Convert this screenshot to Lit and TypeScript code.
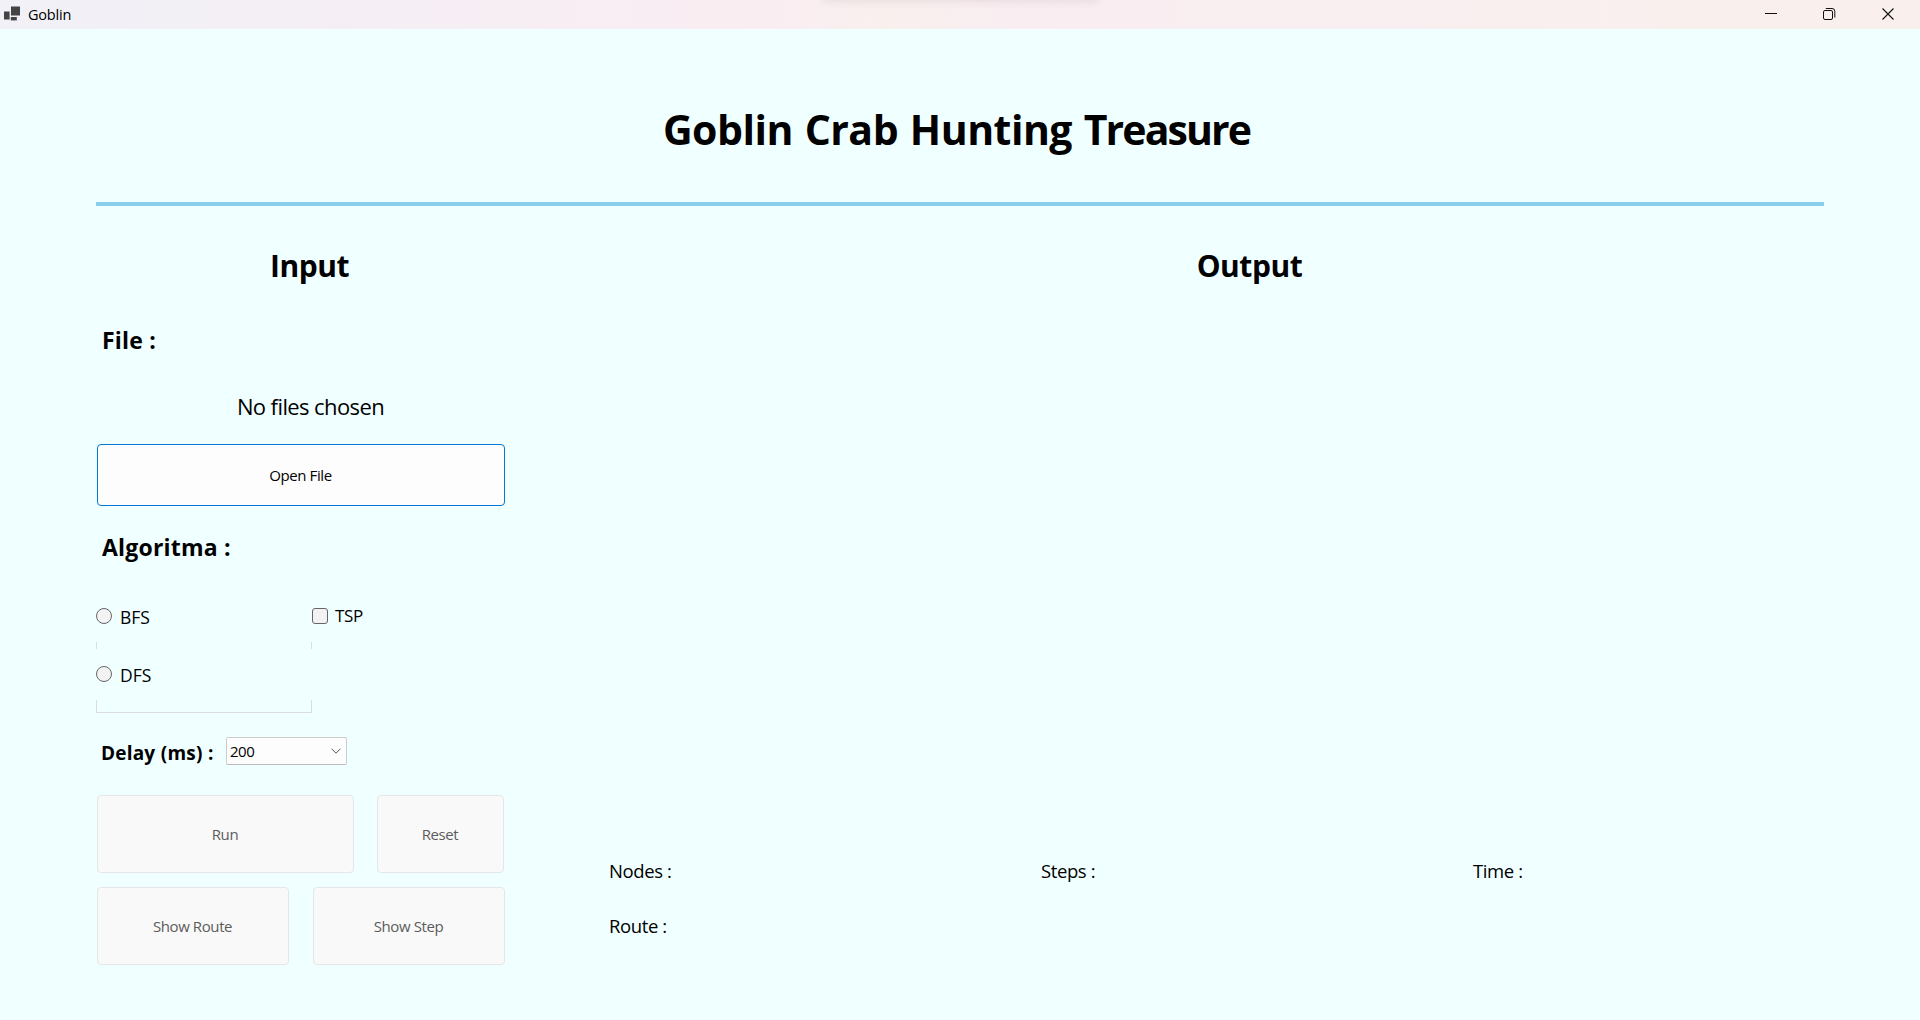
import { LitElement, html, css } from "lit";
import { customElement, state } from "lit/decorators.js";

@customElement("title-bar")
export class TitleBar extends LitElement {
  static styles = css`
    :host {
      display: flex;
      align-items: center;
      height: 29px;
      background: linear-gradient(90deg, #f1f1f7 0%, #f3eff5 12%, #faedf2 40%, #f9f0ee 46%, #f9edf1 53%, #f9eef0 70%, #f9f0ee 88%);
      position: relative;
      overflow: hidden;
    }
    .shade {
      position: absolute;
      left: 826px;
      top: -11px;
      width: 270px;
      height: 9px;
      box-shadow: 0 0 10px 3px rgba(60, 30, 50, 0.1);
    }
    .icon { margin: 0 0 1px 4px; }
    .caption {
      flex: 1;
      margin-left: 8px;
      font-size: 14.5px;
      line-height: 20px;
      letter-spacing: -0.2px;
    }
    .tools { display: flex; }
    .tools svg { display: block; width: 59px; height: 29px; }
  `;
  render() {
    return html`
      <div class="shade"></div>
      <svg class="icon" width="16" height="16" viewBox="0 0 16 16" fill="#444">
        <rect x="7" y="0.5" width="9" height="9" />
        <rect x="0" y="5.5" width="5.6" height="8" />
        <rect x="6.8" y="11" width="6" height="3.4" />
      </svg>
      <span class="caption">Goblin</span>
      <div class="tools">
        <svg viewBox="0 0 59 29"><path d="M22 13.5h12" stroke="#111" /></svg>
        <svg viewBox="0 0 59 29" fill="none" stroke="#111">
          <rect x="21.5" y="10.5" width="9" height="9" rx="1.5" />
          <path d="M23.8 8.5h6.2a2.8 2.8 0 0 1 2.8 2.8v6.2" />
        </svg>
        <svg viewBox="0 0 59 29"><path d="M21.5 8.5l11 11m0-11l-11 11" stroke="#111" stroke-width="1.1" /></svg>
      </div>
    `;
  }
}

@customElement("app-root")
export class AppRoot extends LitElement {
  static styles = css`
    :host {
      display: flex;
      flex-direction: column;
      box-sizing: border-box;
      height: 1020px;
      background: #f0ffff;
      color: #000;
      font-family: "Open Sans", "Noto Sans", sans-serif;
      overflow: hidden;
    }
    * { box-sizing: border-box; }
    h1, h2, h3 { margin: 0; font-weight: 700; white-space: nowrap; }
    header {
      height: 177px;
      margin: 0 96px;
      padding: 27px 7px 0 0;
      display: flex;
      align-items: center;
      justify-content: center;
      border-bottom: 4px solid #87ceeb;
    }
    h1 { font-size: 41px; line-height: 56px; letter-spacing: -0.5px; word-spacing: 1.6px; }
    h1 .tight { letter-spacing: -1.9px; }
    h2 { font-size: 30px; line-height: 116px; padding-top: 2px; text-align: center; letter-spacing: -0.45px; }
    h3 { font-size: 23px; padding-left: 6px; letter-spacing: 0.2px; }
    main { display: grid; grid-template-columns: 432px 1300px; column-gap: 72px; padding-left: 96px; }
    .input { display: flex; flex-direction: column; }
    .input h2 { padding-right: 5px; }
    .output h2 { padding-right: 1px; }
    .file { line-height: 32px; }
    .chosen {
      font-size: 22px;
      line-height: 75px;
      letter-spacing: -0.6px;
      margin-top: 13px;
      padding-right: 3px;
      text-align: center;
    }
    .btn {
      font: inherit;
      font-size: 15px;
      letter-spacing: -0.4px;
      color: #000;
      background: #fdfdfd;
      border: 1px solid #0078d4;
      border-radius: 4px;
      padding: 0 1px 0 0;
      height: 78px;
      width: 100%;
    }
    .btn:disabled { color: #5c5c5c; background: #f9f9f9; border-color: #e6e6e6; }
    .open { width: 408px; height: 62px; margin-left: 1px; }
    .algo { line-height: 82px; }
    .choices { display: grid; grid-template-columns: 216px 1fr; height: 125px; }
    .choice { display: flex; align-items: center; font-size: 17.5px; line-height: 24px; gap: 8px; }
    .radio, .check { width: 16px; height: 16px; background: #f3f3f3; border: 1px solid #666; }
    .radio { border-radius: 50%; }
    .check { border-radius: 3px; }
    .group .choice { height: 52px; }
    .group { padding-top: 2px; }
    .group .choice span { padding-top: 2px; }
    .edge { height: 7px; border: solid #dcdcdc; border-width: 0 1px; }
    .edge.last { height: 13px; border-bottom-width: 1px; }
    .group .second { height: 51px; padding-bottom: 1px; }
    .tsp { height: 56px; font-size: 17px; gap: 7px; letter-spacing: -0.3px; }
    .delay { display: flex; align-items: center; height: 76px; font-size: 19px; font-weight: 700; padding-left: 5px; }
    .delay .label { width: 125px; padding-top: 4px; white-space: nowrap; letter-spacing: 0.2px; word-spacing: 0.3px; }
    .select {
      display: flex;
      align-items: center;
      justify-content: space-between;
      width: 121px;
      height: 28px;
      padding: 0 5px 0 3px;
      font-size: 15px;
      letter-spacing: -0.5px;
      font-weight: 400;
      background: #fdfdfd;
      border: 1px solid #ccc;
      border-bottom-color: #bbb;
      border-radius: 2px;
    }
    .row { display: grid; margin: 6px 0 0 1px; }
    .row.first { grid-template-columns: 257px 127px; gap: 23px; }
    .row.next { grid-template-columns: 192px 192px; gap: 24px; margin-top: 14px; }
    .output { display: flex; flex-direction: column; }
    .stats {
      margin-top: 519px;
      display: grid;
      grid-template-columns: 432px 432px 1fr;
      font-size: 18.5px;
      line-height: 55px;
      letter-spacing: -0.4px;
      padding-left: 9px;
    }
  `;

  @state() private fileName = "No files chosen";
  @state() private delay = 200;

  render() {
    return html`
      <title-bar></title-bar>
      <header><h1>Goblin Crab Hunting <span class="tight">Treasure</span></h1></header>
      <main>
        <section class="input">
          <h2>Input</h2>
          <h3 class="file">File :</h3>
          <div class="chosen">${this.fileName}</div>
          <button class="btn open">Open File</button>
          <h3 class="algo">Algoritma :</h3>
          <div class="choices">
            <div class="group">
              <div class="choice"><i class="radio"></i><span>BFS</span></div>
              <div class="edge"></div>
              <div class="choice second"><i class="radio"></i><span>DFS</span></div>
              <div class="edge last"></div>
            </div>
            <div class="choice tsp"><i class="check"></i><span>TSP</span></div>
          </div>
          <div class="delay">
            <span class="label">Delay (ms) :</span>
            <div class="select">
              <span>${this.delay}</span>
              <svg width="10" height="6" viewBox="0 0 10 6" fill="none" stroke="#555"><path d="M.5 .7L5 5.2L9.5 .7" /></svg>
            </div>
          </div>
          <div class="row first">
            <button class="btn" disabled>Run</button>
            <button class="btn" disabled>Reset</button>
          </div>
          <div class="row next">
            <button class="btn" disabled>Show Route</button>
            <button class="btn" disabled>Show Step</button>
          </div>
        </section>
        <section class="output">
          <h2>Output</h2>
          <div class="stats">
            <span>Nodes :</span><span>Steps :</span><span>Time :</span>
            <span>Route :</span>
          </div>
        </section>
      </main>
    `;
  }
}
